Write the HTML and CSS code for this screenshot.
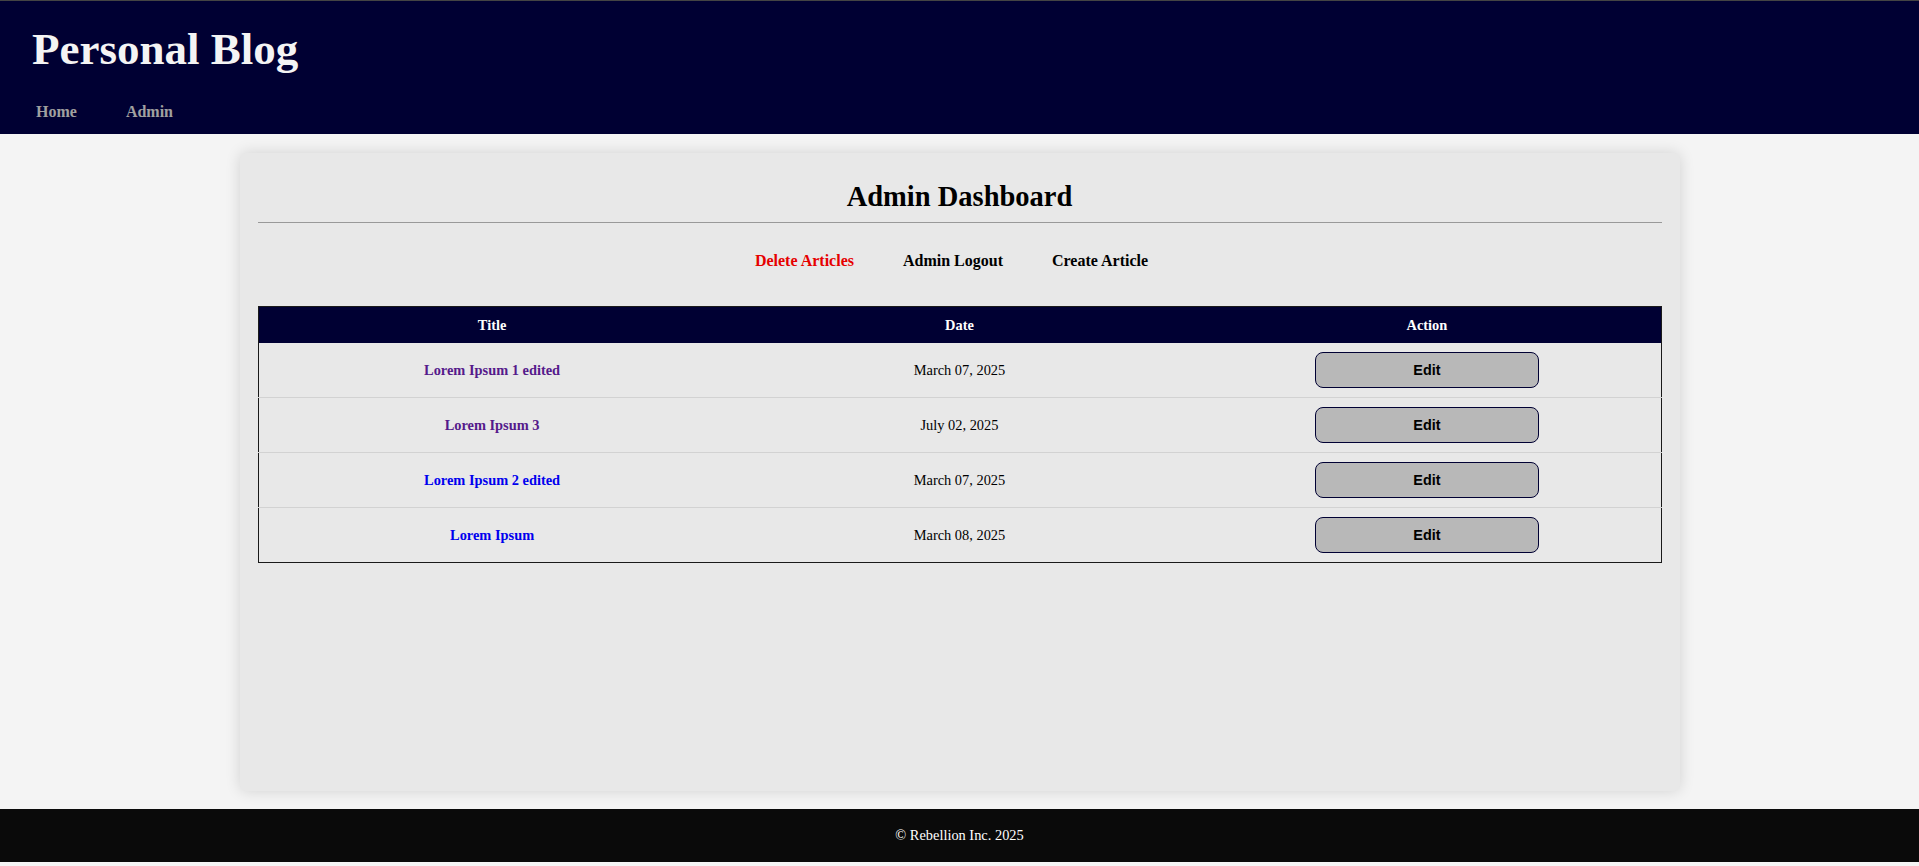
FILE: index.html
```html
<!DOCTYPE html>
<html lang="en">
<head>
<meta charset="utf-8">
<title>Admin Dashboard</title>
<link rel="stylesheet" href="styles.css">
</head>
<body>
<header class="site-header">
  <h1 class="site-title">Personal Blog</h1>
  <nav class="site-nav">
    <a href="#">Home</a>
    <a href="#">Admin</a>
  </nav>
</header>
<main class="main">
  <section class="card">
    <h2 class="card-title">Admin Dashboard</h2>
    <div class="actions">
      <a href="#" class="danger">Delete Articles</a>
      <a href="#">Admin Logout</a>
      <a href="#">Create Article</a>
    </div>
    <table class="articles">
      <thead>
        <tr><th>Title</th><th>Date</th><th>Action</th></tr>
      </thead>
      <tbody>
        <tr><td><a href="#" class="visited">Lorem Ipsum 1 edited</a></td><td>March 07, 2025</td><td><button class="edit-btn">Edit</button></td></tr>
        <tr><td><a href="#" class="visited">Lorem Ipsum 3</a></td><td>July 02, 2025</td><td><button class="edit-btn">Edit</button></td></tr>
        <tr><td><a href="#" class="unvisited">Lorem Ipsum 2 edited</a></td><td>March 07, 2025</td><td><button class="edit-btn">Edit</button></td></tr>
        <tr><td><a href="#" class="unvisited">Lorem Ipsum</a></td><td>March 08, 2025</td><td><button class="edit-btn">Edit</button></td></tr>
      </tbody>
    </table>
  </section>
</main>
<footer class="site-footer">© Rebellion Inc. 2025</footer>
</body>
</html>
```
FILE: styles.css
```css
html, body {
  margin: 0;
  padding: 0;
  background: #f4f4f4;
  font-family: "Liberation Serif", "Times New Roman", serif;
}

.site-header {
  background: #000033;
  border-top: 1px solid #444;
  padding: 23px 32px 13px;
}

.site-title {
  margin: 0;
  font-size: 45px;
  line-height: 50px;
  font-weight: bold;
  color: #f4f4f4;
}

.site-nav {
  margin-top: 29px;
  padding-left: 4px;
  display: flex;
  gap: 49px;
  line-height: 18px;
}

.site-nav a {
  color: #a0a0a0;
  font-weight: bold;
  font-size: 16px;
  text-decoration: none;
}

.main {
  padding: 19px 0 18px;
}

.card {
  box-sizing: border-box;
  width: 1440px;
  min-height: 638px;
  margin: 0 auto;
  padding: 18px;
  background: #e8e8e8;
  border-radius: 6px;
  box-shadow: 0 0 15px rgba(0, 0, 0, 0.14);
}

.card-title {
  margin: 10px 0 0;
  padding-bottom: 9px;
  border-bottom: 1px solid #999;
  text-align: center;
  font-size: 28.5px;
  line-height: 32px;
  font-weight: bold;
  color: #000;
}

.actions {
  display: flex;
  justify-content: center;
  gap: 49px;
  margin: 29px 0 36px;
  padding-right: 16px;
  line-height: 18px;
}

.actions a {
  color: #000;
  font-weight: bold;
  font-size: 16px;
  text-decoration: none;
}

.actions a.danger {
  color: #e60000;
}

.articles {
  width: 100%;
  table-layout: fixed;
  border-collapse: collapse;
  border: 1px solid #1a1a1a;
  font-size: 14.4px;
}

.articles th {
  background: #000033;
  color: #fff;
  font-weight: bold;
  height: 36px;
  padding: 0;
  text-align: center;
}

.articles td {
  height: 54px;
  padding: 0;
  text-align: center;
  border-bottom: 1px solid #d2d2d2;
  color: #000;
}

.articles tbody tr:last-child td {
  border-bottom: 1px solid #1a1a1a;
}

.articles td a {
  font-weight: bold;
  text-decoration: none;
}

.articles td a.visited {
  color: #551a8b;
}

.articles td a.unvisited {
  color: #0000ee;
}

.edit-btn {
  width: 224px;
  height: 36px;
  background: #b8b8b8;
  border: 1px solid #000033;
  border-radius: 8px;
  font-family: "Liberation Sans", Arial, sans-serif;
  font-size: 14.4px;
  font-weight: bold;
  color: #000;
  cursor: pointer;
  vertical-align: middle;
}

.site-footer {
  background: #0a0a0a;
  color: #fff;
  text-align: center;
  font-size: 14.4px;
  line-height: 17px;
  padding: 18px 0;
}
```
